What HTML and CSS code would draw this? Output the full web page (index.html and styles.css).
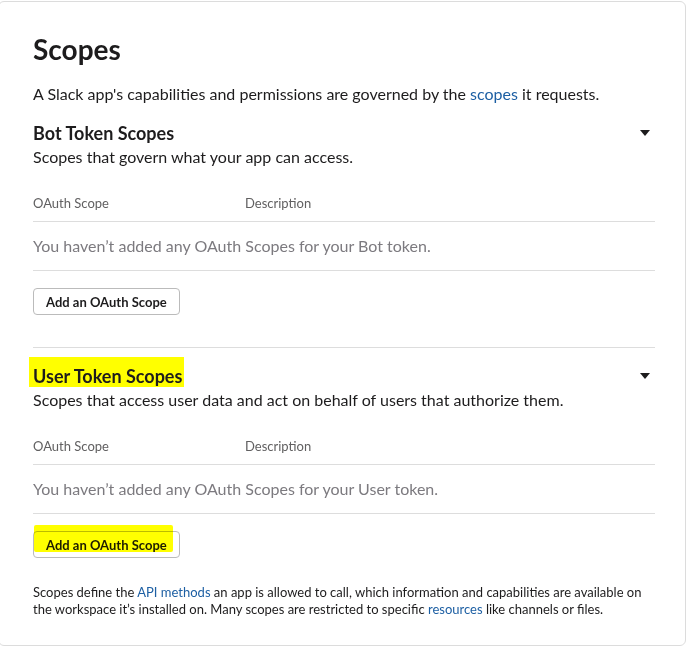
FILE: index.html
```html
<!DOCTYPE html>
<html>
<head>
<meta charset="utf-8">
<link rel="stylesheet" href="styles.css">
</head>
<body>
<div class="card">
  <h1 class="title">Scopes</h1>
  <p class="intro">A Slack app's capabilities and permissions are governed by the <a href="#">scopes</a> it requests.</p>

  <section class="section">
    <div class="sec-head">
      <h2 class="sec-title">Bot Token Scopes</h2>
      <span class="caret"></span>
    </div>
    <p class="sec-sub">Scopes that govern what your app can access.</p>
    <div class="table">
      <div class="thead"><span class="col1">OAuth Scope</span><span class="col2">Description</span></div>
      <div class="empty">You haven’t added any OAuth Scopes for your Bot token.</div>
    </div>
    <button class="btn">Add an OAuth Scope</button>
  </section>

  <section class="section second">
    <div class="sec-head">
      <h2 class="sec-title"><span class="hl-title">User Token Scopes</span></h2>
      <span class="caret"></span>
    </div>
    <p class="sec-sub">Scopes that access user data and act on behalf of users that authorize them.</p>
    <div class="table">
      <div class="thead"><span class="col1">OAuth Scope</span><span class="col2">Description</span></div>
      <div class="empty">You haven’t added any OAuth Scopes for your User token.</div>
    </div>
    <div class="btn-wrap">
      <button class="btn">Add an OAuth Scope</button>
      <span class="hl-btn"></span>
    </div>
  </section>

  <p class="foot">Scopes define the <a href="#">API methods</a> an app is allowed to call, which information and capabilities are available on the workspace it’s installed on. Many scopes are restricted to specific <a href="#">resources</a> like channels or files.</p>
</div>
</body>
</html>
```

FILE: styles.css
```css
* { box-sizing: border-box; }
html, body { margin: 0; padding: 0; background: #fff; }
body {
  font-family: Lato, "Open Sans", sans-serif;
  color: #1d1c1d;
  overflow: hidden;
}
.card {
  width: 688px;
  margin: 1px 0 0 -2px;
  border: 1px solid #dcdcdc;
  border-radius: 6px;
  padding: 30px 30px 30px 34px;
  height: 645px;
}
a { color: #1d5fa3; text-decoration: none; }
.title {
  margin: 0;
  font-size: 28px;
  font-weight: 700;
  line-height: 34px;
}
.intro {
  margin: 17px 0 0;
  font-size: 16px;
  line-height: 22px;
}
.section { margin-top: 16px; }
.sec-head {
  display: flex;
  justify-content: space-between;
  align-items: center;
}
.sec-title {
  margin: 0;
  font-size: 18px;
  font-weight: 700;
  line-height: 24px;
}
.caret {
  width: 0; height: 0;
  border-left: 5px solid transparent;
  border-right: 5px solid transparent;
  border-top: 6px solid #1d1c1d;
  margin-right: 5px;
}
.sec-sub {
  margin: 1px 0 0;
  font-size: 16px;
  line-height: 22px;
}
.table { margin-top: 26px; }
.thead {
  display: flex;
  font-size: 13px;
  color: #616061;
  line-height: 18px;
  padding-bottom: 9px;
  border-bottom: 1px solid #dddddd;
}
.col1 { width: 212px; }
.empty {
  font-size: 16px;
  color: #7c7a7f;
  line-height: 22px;
  padding: 13px 0 13px;
  border-bottom: 1px solid #dddddd;
}
.btn {
  margin-top: 17px;
  height: 27px;
  padding: 0 12px;
  font-family: Lato, sans-serif;
  font-size: 13px;
  font-weight: 700;
  color: #1d1c1d;
  background: #fff;
  border: 1px solid #bbbbbb;
  border-radius: 4px;
}
.second {
  margin-top: 32px;
  border-top: 1px solid #dddddd;
  padding-top: 16px;
}
.hl-title {
  background: #ffff00;
  padding: 8px 2px 0 4px;
  margin-left: -4px;
}
.btn-wrap { position: relative; display: inline-block; vertical-align: top; }
.hl-btn {
  position: absolute;
  left: 1px;
  top: 11px;
  width: 139px;
  height: 27px;
  background: #ffff00;
  mix-blend-mode: multiply;
  border-radius: 2px;
}
.foot {
  margin: 26px 0 0;
  font-size: 13px;
  line-height: 17px;
  color: #1d1c1d;
}
```
